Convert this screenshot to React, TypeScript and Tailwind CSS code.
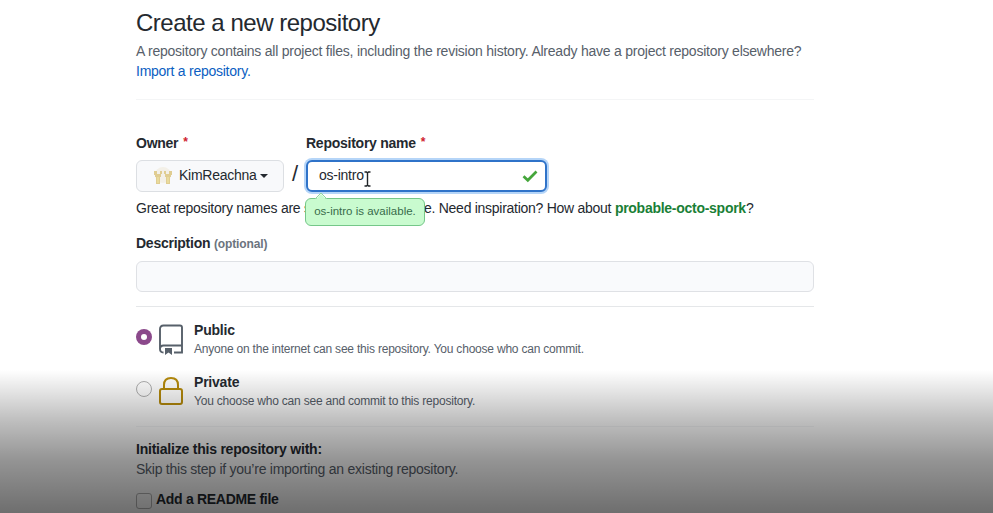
import React from "react";

function Star() {
  return <span className="relative -top-[2px] ml-[5px] text-[12px] text-[#cf222e]">*</span>;
}

function OwnerAvatar() {
  return (
    <svg width="18" height="18" viewBox="0 0 18 18" className="ml-[17px]">
      <circle cx="9" cy="8" r="8" fill="#f3f0e8" />
      <path d="M0 4h3v3h3V4h2v3H7v3H6v7H2v-7H1V8H0zM18 4h-3v3h-3V4h-2v3h1v3h1v7h4v-7h1V8h1z" fill="#e0cd92" />
      <path d="M3 10h2v6H3zM13 10h2v6h-2z" fill="#e9db9c" />
    </svg>
  );
}

export default function App() {
  return (
    <main className="relative h-[513px] w-[993px] overflow-hidden bg-white pl-[136px] font-['Liberation_Sans',Arial,sans-serif] text-[14px] leading-5 tracking-[-0.25px] whitespace-nowrap text-[#24292f]">
      <div className="flex w-[678px] flex-col">
        <header className="h-[100px] border-b border-[#f4f5f6] pt-[8px]">
          <h1 className="text-[24px] leading-[30px] tracking-[-0.48px]">Create a new repository</h1>
          <p className="mt-[3px] tracking-[-0.23px] text-[#57606a]">
            A repository contains all project files, including the revision history. Already have a project repository elsewhere?
          </p>
          <a className="block text-[#0b5ec2]">Import a repository.</a>
        </header>

        <section className="flex h-[53px] pt-[33px] font-bold">
          <div className="w-[170px]">Owner<Star /></div>
          <div>Repository name<Star /></div>
        </section>

        <section className="relative mt-[5px] flex h-[36px] items-center">
          <button className="flex h-[32px] w-[148px] items-center rounded-[6px] border border-[#dcdfe3] bg-[#f8f9fb] tracking-[-0.27px]">
            <OwnerAvatar />
            <span className="mb-[2px] ml-[7px]">KimReachna</span>
            <span className="ml-[4px] border-x-4 border-t-4 border-x-transparent border-t-[#24292f]" />
          </button>
          <span className="w-[22px] pb-[5px] text-center text-[22px]">/</span>
          <div className="flex h-[32px] w-[241px] items-center rounded-[6px] border-2 border-[#2f73c9] bg-white shadow-[0_0_0_2px_#b5d5f8]">
            <span className="mb-[2px] ml-[11px] w-[44px]">os-intro</span>
            <svg width="7" height="16" viewBox="0 0 7 16" className="mt-[6px] ml-[1px]" fill="none" stroke="#202428" strokeWidth="1.4">
              <path d="M.5 1h2l1 1 1-1h2M3.500 2v12M.5 15h2l1-1 1 1h2" />
            </svg>
            <svg width="16" height="14" viewBox="0 0 16 14" className="ml-[151px]" fill="none" stroke="#45a63b" strokeWidth="2.7">
              <path d="M1.500 7.300l4.300 4L14.500 2.500" />
            </svg>
          </div>
          <div className="absolute top-[40px] left-[169px] z-10 h-[28px] w-[120px] rounded-[6px] border border-[#75c789] bg-[#c9fbcf] text-center text-[11.5px] leading-[25px] tracking-normal text-[#386b4b]">
            <svg width="14" height="8" viewBox="0 0 14 8" className="absolute -top-[7px] left-[8px]">
              <path d="M1 8l6-6 6 6z" fill="#c9fbcf" />
              <path d="M1 7l6-6 6 6" fill="none" stroke="#90d5a2" />
            </svg>
            os-intro is available.
          </div>
        </section>

        <div className="mt-[4px] flex h-5">
          <p className="w-[170px] tracking-[-0.23px]">Great repository names are s</p>
          <p className="ml-[118px] tracking-[-0.27px]">
            e. Need inspiration? How about <b className="text-[#1a7f37]">probable-octo-spork</b>?
          </p>
        </div>

        <section className="mt-[15px] flex h-[74px] flex-col border-b border-[#e5e7e9]">
          <div><b>Description</b> <b className="text-[12px] tracking-[-0.12px] text-[#6b747e]">(optional)</b></div>
          <div className="mt-[7px] h-[31px] rounded-[6px] border border-[#dfe1e5] bg-[#f9fafc]" />
        </section>

        <section className="flex h-[120px] flex-col border-b border-[#f4f5f6] pt-[13px] tracking-[-0.21px]">
          <div className="flex h-[52px]">
            <span className="mt-[9px] flex size-4 items-center justify-center rounded-full bg-[#8b498b]"><i className="size-[6px] rounded-full bg-white" /></span>
            <svg width="26" height="32" viewBox="0 0 26 32" className="mt-[4px] ml-[6px]" fill="none" stroke="#57606a" strokeWidth="1.9">
              <path d="M5.500 28.500q-3.500 0-3.500-3.500V5q0-3.500 3.500-3.500H22q2 0 2 2v25h-8M2 25q0-3.500 3.500-3.500H24" />
              <path d="M7 24h7v7l-3.500-2.500L7 31z" fill="#57606a" stroke="none" />
            </svg>
            <div className="ml-[10px]">
              <b className="block leading-[20px]">Public</b>
              <span className="block text-[12px] leading-[19px] text-[#57606a]">Anyone on the internet can see this repository. You choose who can commit.</span>
            </div>
          </div>
          <div className="flex">
            <span className="mt-[9px] size-4 rounded-full border border-[#b0b0b0] bg-white" />
            <svg width="26" height="32" viewBox="0 0 26 32" className="mt-[4px] ml-[6px]" fill="none" stroke="#b58a0b" strokeWidth="2">
              <rect x="2" y="13" width="22" height="15" rx="2" />
              <path d="M6 13V9q0-7 7-7t7 7v4" />
            </svg>
            <div className="ml-[10px]">
              <b className="block leading-[20px]">Private</b>
              <span className="block text-[12px] leading-[19px] text-[#57606a]">You choose who can see and commit to this repository.</span>
            </div>
          </div>
        </section>

        <section className="pt-[12px]">
          <b className="block tracking-[-0.22px]">Initialize this repository with:</b>
          <p className="text-[#57606a]">Skip this step if you’re importing an existing repository.</p>
          <div className="mt-[10px] flex">
            <span className="mt-[4px] mr-[4px] size-4 rounded-[3px] border border-[#b5b5b5] bg-white" />
            <b className="tracking-[-0.3px]">Add a README file</b>
          </div>
        </section>
      </div>
      <div className="pointer-events-none absolute inset-x-0 bottom-0 z-20 h-[143px] bg-[linear-gradient(to_bottom,transparent,rgba(0,0,0,.25)_35%,rgba(0,0,0,.42)_63%,rgba(0,0,0,.57))]" />
    </main>
  );
}
